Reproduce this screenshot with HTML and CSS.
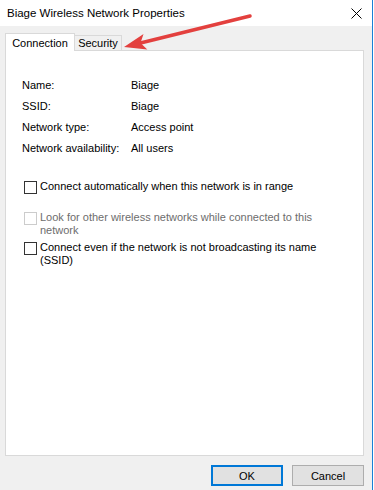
FILE: index.html
```html
<!DOCTYPE html>
<html lang="en">
<head>
  <meta charset="UTF-8" />
  <title>Biage Wireless Network Properties</title>
  <link rel="stylesheet" href="styles.css">
</head>
<body>
  <div class="window">
    <div class="titlebar">
      <span class="title">Biage Wireless Network Properties</span>
      <svg class="close" width="11" height="11" viewBox="0 0 11 11">
        <path d="M0.5 0.5 L10.5 10.5 M10.5 0.5 L0.5 10.5" stroke="#000" stroke-width="1" fill="none" />
      </svg>
    </div>

    <div class="content">
      <div class="tabs">
        <div class="tab active">Connection</div>
        <div class="tab">Security</div>
      </div>

      <div class="panel">
        <div class="info">
          <span>Name:</span><span>Biage</span>
          <span>SSID:</span><span>Biage</span>
          <span>Network type:</span><span>Access point</span>
          <span>Network availability:</span><span>All users</span>
        </div>

        <div class="options">
          <label class="option first">
            <span class="box"></span>
            <span class="text">Connect automatically when this network is in range</span>
          </label>
          <label class="option disabled">
            <span class="box"></span>
            <span class="text">Look for other wireless networks while connected to this network</span>
          </label>
          <label class="option">
            <span class="box"></span>
            <span class="text">Connect even if the network is not broadcasting its name (SSID)</span>
          </label>
        </div>
      </div>

      <div class="buttons">
        <button class="btn default">OK</button>
        <button class="btn">Cancel</button>
      </div>
    </div>

    <!-- annotation arrow drawn over the dialog -->
    <svg class="arrow" width="374" height="60" viewBox="0 0 374 60">
      <line x1="140.5" y1="43" x2="250" y2="16" stroke="#e3403e" stroke-width="3.5" stroke-linecap="round" />
      <polygon points="124,47 147.3,49.6 140.5,43 143.5,34" fill="#e3403e" />
    </svg>
  </div>
</body>
</html>
```

FILE: styles.css
```css
* {
  margin: 0;
  padding: 0;
  box-sizing: border-box;
}

body {
  font-family: 'Liberation Sans', Arial, sans-serif;
  font-size: 11px;
  color: #000;
  background-color: #fff;
}

.window {
  position: relative;
  width: 373px;
  height: 490px;
  background-color: #f0f0f0;
  border-right: 1px solid #1a80d6;
}

.titlebar {
  height: 26px;
  background-color: #fff;
  display: flex;
  align-items: center;
  justify-content: space-between;
  padding: 0 10px 0 7px;
}

.title {
  font-size: 11.5px;
}

.content {
  padding: 7px 8px 0 5px;
}

.tabs {
  display: flex;
  align-items: flex-end;
  height: 17px;
}

.tab {
  width: 48px;
  height: 15px;
  margin-left: -1px;
  border: 1px solid #d9d9d9;
  border-bottom: none;
  background-color: #f0f0f0;
  text-align: center;
  line-height: 15px;
}

.tab.active {
  position: relative;
  z-index: 1;
  width: 70px;
  height: 18px;
  margin-left: 0;
  margin-bottom: -1px;
  background-color: #fff;
  line-height: 18px;
}

.panel {
  height: 406px;
  background-color: #fff;
  border: 1px solid #d9d9d9;
  padding: 24px 0 0 16px;
}

.info {
  display: grid;
  grid-template-columns: 109px auto;
  grid-auto-rows: 21px;
  line-height: 21px;
}

.options {
  margin-top: 21px;
}

.option {
  display: flex;
  align-items: flex-start;
  gap: 3px;
  margin-left: 2px;
  line-height: 13px;
  margin-top: 4px;
}

.option.first {
  margin-top: 0;
}

.option.disabled {
  margin-top: 17px;
  color: #6d6d6d;
}

.box {
  flex: none;
  width: 13px;
  height: 13px;
  margin-top: 1px;
  border: 1px solid #333;
  background-color: #fff;
}

.option.disabled .box {
  border-color: #cccccc;
}

.text {
  width: 285px;
}

.buttons {
  display: flex;
  justify-content: flex-end;
  gap: 9px;
  padding-top: 9px;
}

.btn {
  width: 72px;
  height: 21px;
  font-family: inherit;
  font-size: 11px;
  background-color: #e1e1e1;
  border: 1px solid #adadad;
}

.btn.default {
  border: 2px solid #0078d7;
}

.arrow {
  position: absolute;
  top: 0;
  left: 0;
  pointer-events: none;
}
```
